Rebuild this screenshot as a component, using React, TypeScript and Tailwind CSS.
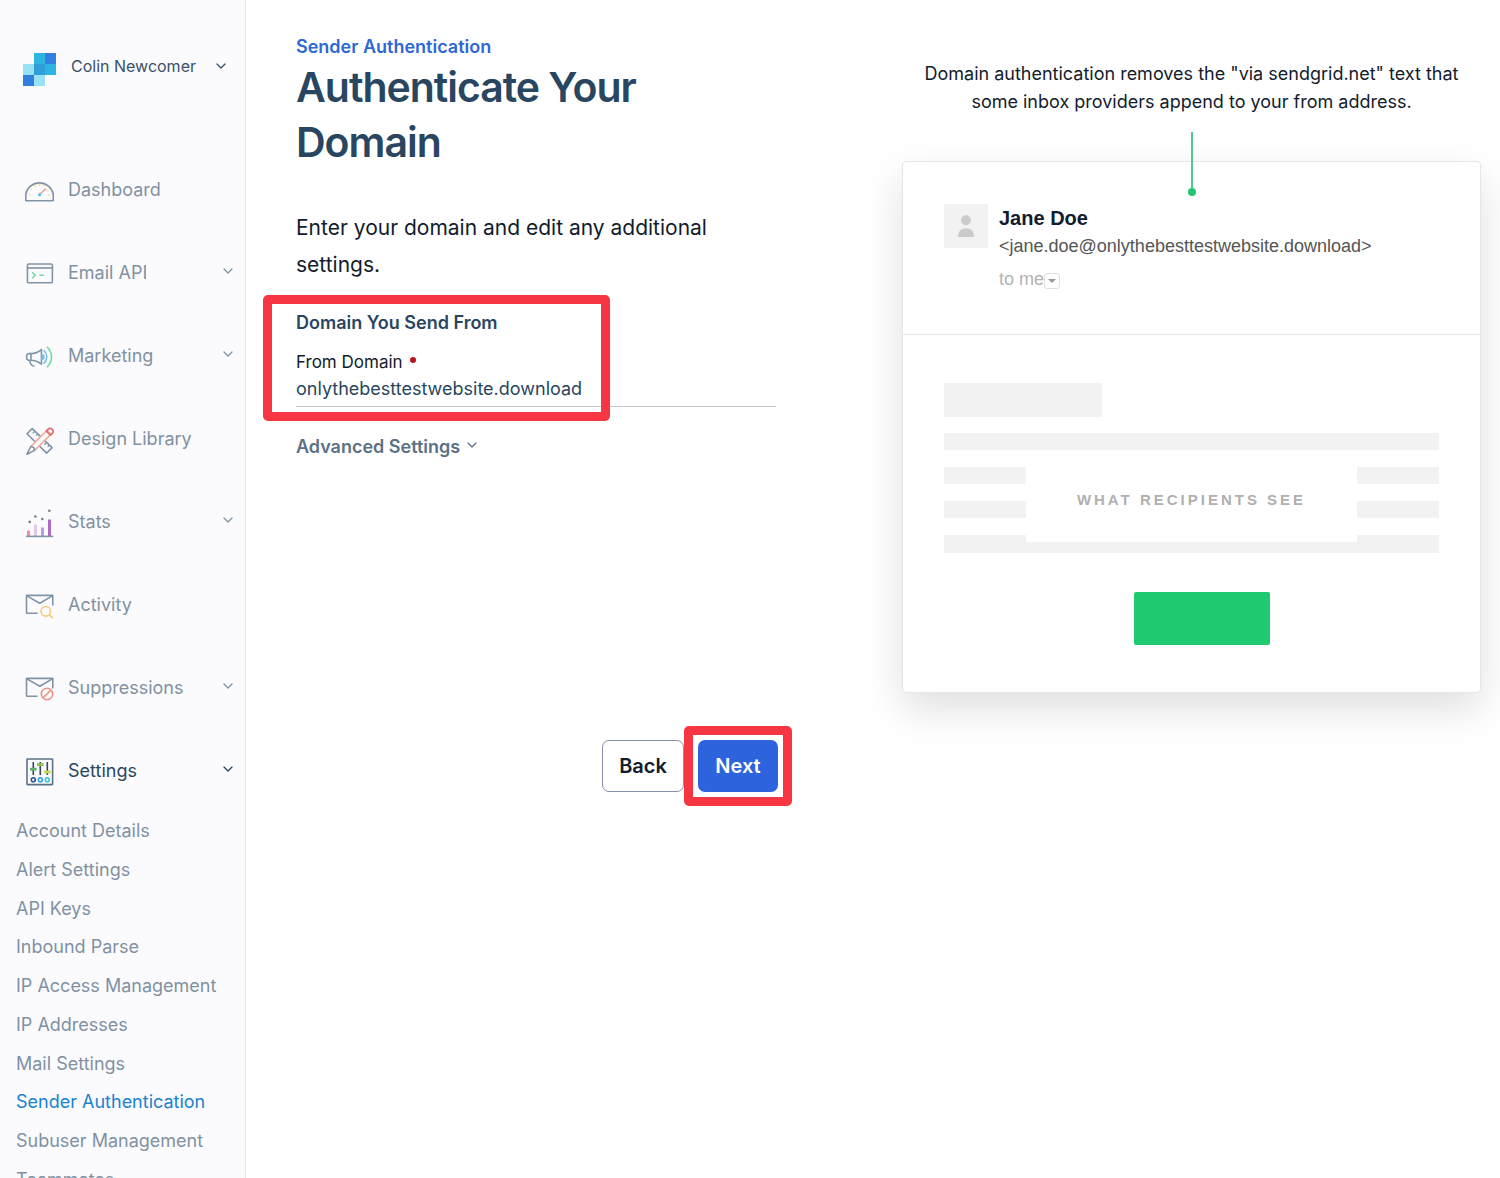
import { useState } from "react";
import type { ReactNode } from "react";
import clsx from "clsx";

const SLATE = "#8194a6";

const Chevron = ({ className }: { className?: string }) => (
  <svg
    viewBox="0 0 10 6"
    fill="none"
    stroke="currentColor"
    strokeWidth="1.3"
    strokeLinecap="round"
    strokeLinejoin="round"
    className={clsx("h-[6px] w-[10px] shrink-0", className)}
  >
    <path d="M1 1l4 4 4-4" />
  </svg>
);

const Logo = () => (
  <svg viewBox="0 0 33 33" className="size-[33px] shrink-0" shapeRendering="crispEdges">
    <rect x="0" y="11" width="11" height="11" fill="#99e1f4" />
    <rect x="11" y="22" width="11" height="11" fill="#99e1f4" />
    <rect x="11" y="0" width="11" height="11" fill="#2db4e1" />
    <rect x="22" y="11" width="11" height="11" fill="#2db4e1" />
    <rect x="11" y="11" width="11" height="11" fill="#2e9fd9" />
    <rect x="22" y="0" width="11" height="11" fill="#337fe0" />
    <rect x="0" y="22" width="11" height="11" fill="#337fe0" />
  </svg>
);

const Icon = ({ children }: { children: ReactNode }) => (
  <svg
    viewBox="0 0 30 30"
    fill="none"
    strokeWidth="1.6"
    strokeLinejoin="round"
    className="mt-0.5 size-[30px] shrink-0"
  >
    {children}
  </svg>
);

const DashboardIcon = () => (
  <Icon>
    <path d="M1.8 24.7V18a13.9 13.4 0 0 1 27.4 0v6.7z" stroke={SLATE} />
    <path
      d="M5 19h1.6M6.8 12.8l1.2 1M10.6 9.6l.7 1.2M15.5 8v2M20.3 9.2l-.7 1.2M25.8 19h-1.6M24.4 14l-1.2.8"
      stroke="#f6dc7c"
    />
    <path d="M16.5 17.8l5.4-5.3" stroke="#ee9a8f" />
    <circle cx="15.6" cy="18.7" r="1.5" fill="#4fb3e3" />
  </Icon>
);

const EmailApiIcon = () => (
  <Icon>
    <rect x="3.4" y="5" width="25" height="18.8" rx="1.4" stroke={SLATE} />
    <path d="M3.4 9h25" stroke={SLATE} />
    <path d="M8.3 13.2l3 3-3 3M15.3 16.2h4.6" stroke="#6fd9a0" />
  </Icon>
);

const MarketingIcon = () => (
  <Icon>
    <path d="M7 11.6c4 0 7.5-1.6 10.5-4v14.6c-3-2.4-6.5-4-10.5-4z" stroke={SLATE} />
    <path d="M7 11.6H4.200L2.700 12.8v4.200l1.500 1.200H7" stroke={SLATE} />
    <path d="M5.800 18.500c.2 3 1.500 5.300 4.600 5.700" stroke={SLATE} />
    <path d="M17.600 12.800a2.200 2.200 0 0 1 0 4.400z" fill="#7db4e6" stroke="#7db4e6" />
    <path d="M19.700 8.300c4 4 4 9.200 0 13.400" stroke="#6cbfe8" />
    <path d="M23 4.800c6 6 6 14.400 0 20.400" stroke="#6fd9a0" />
  </Icon>
);

const DesignIcon = () => (
  <Icon>
    <path d="M3 8.800l5.200-5.200 19.900 19-5.500 5.500z" stroke={SLATE} />
    <path d="M10.800 6.200L8.600 8.400M13.800 9l-1.600 1.600M22.600 17.500l-2.200 2.200M25.300 20.200l-1.600 1.600" stroke={SLATE} strokeWidth="1.300" />
    <path d="M6.800 21.500L23 5.300l3.900 3.900L10.600 25.400z" fill="#fbfbfe" stroke="#f3a898" />
    <path d="M22.300 6l1.600-1.600a2.900 2.900 0 0 1 4.200 4.200l-1.700 1.600z" stroke="#e0686b" />
    <path d="M6.800 21.500L2.900 29.200l7.700-3.800-.9-2.800z" fill="#fbfbfe" stroke={SLATE} />
  </Icon>
);

const StatsIcon = () => (
  <Icon>
    <path d="M4.500 28.500v-6" stroke="#f28bb0" strokeWidth="3" />
    <path d="M11.500 28.500V16.500" stroke="#e0c8ee" strokeWidth="3" />
    <path d="M18.500 28.500v-9" stroke="#b79be6" strokeWidth="3" />
    <path d="M25.500 28.500v-17" stroke="#ad6cc4" strokeWidth="3" />
    <path d="M2 28.400h27.300" stroke={SLATE} />
    <g fill="#6d8193">
      <circle cx="5.700" cy="13.900" r="1.300" />
      <circle cx="11.400" cy="8.500" r="1.300" />
      <circle cx="18.300" cy="11" r="1.300" />
      <circle cx="25.300" cy="2.800" r="1.300" />
    </g>
  </Icon>
);

const Envelope = () => (
  <path
    d="M13.6 22.3H3.4a.9.9 0 0 1-.9-.9V4.4h26.3v10M2.5 4.6l13.2 7.6 13.1-7.6"
    stroke={SLATE}
  />
);

const ActivityIcon = () => (
  <Icon>
    <Envelope />
    <circle cx="21.8" cy="20.3" r="4.8" stroke="#f6cb7d" />
    <path d="M25.300 23.800l3.700 3.400" stroke="#f6cb7d" />
  </Icon>
);

const SuppressionsIcon = () => (
  <Icon>
    <Envelope />
    <circle cx="23" cy="20" r="5.700" stroke="#ee9287" />
    <path d="M19.200 23.800l7.600-7.600" stroke="#ee9287" />
  </Icon>
);

const SettingsIcon = () => (
  <Icon>
    <rect x="3" y="2" width="25.600" height="25.600" rx=".6" stroke="#5b7388" />
    <path d="M9.300 5v13M16.300 5v13M23.300 5v13" stroke="#2f4a62" />
    <path d="M6 12.200h6.600" stroke="#58b368" strokeWidth="2.800" />
    <path d="M13 7.600h6.600" stroke="#8cc152" strokeWidth="2.800" />
    <path d="M20 15h6.600" stroke="#c6d94b" strokeWidth="2.800" />
    <circle cx="9.300" cy="22.700" r="2" stroke="#35508a" />
    <circle cx="16.300" cy="22.700" r="2" stroke="#2f9fd9" />
    <circle cx="23.300" cy="22.700" r="2" stroke="#35c0dc" />
  </Icon>
);

const navItems = [
  { label: "Dashboard", icon: <DashboardIcon /> },
  { label: "Email API", icon: <EmailApiIcon />, expandable: true },
  { label: "Marketing", icon: <MarketingIcon />, expandable: true },
  { label: "Design Library", icon: <DesignIcon /> },
  { label: "Stats", icon: <StatsIcon />, expandable: true },
  { label: "Activity", icon: <ActivityIcon /> },
  { label: "Suppressions", icon: <SuppressionsIcon />, expandable: true },
  { label: "Settings", icon: <SettingsIcon />, expandable: true, active: true },
];

const settingsLinks = [
  "Account Details",
  "Alert Settings",
  "API Keys",
  "Inbound Parse",
  "IP Access Management",
  "IP Addresses",
  "Mail Settings",
  "Sender Authentication",
  "Subuser Management",
  "Teammates",
];

const Sidebar = () => (
  <aside className="w-[246px] shrink-0 overflow-hidden border-r border-[#e6e8ee] bg-[#fbfbfe] text-lg text-[#8091a2]">
    <button className="flex w-full items-center pt-[53px] pr-[19px] pl-[23px] text-[#3a5065]">
      <Logo />
      <span className="mb-2 ml-[15px] flex flex-1 items-center justify-between text-base">
        Colin Newcomer
        <Chevron />
      </span>
    </button>
    <nav className="mt-[62px]">
      <ul>
        {navItems.map((item) => (
          <li key={item.label}>
            <a
              href="#"
              className={clsx(
                "flex h-[83px] items-center pr-3 pl-6",
                item.active && "text-[#294661]"
              )}
            >
              {item.icon}
              <span className="ml-[14px] flex-1">{item.label}</span>
              {item.expandable && <Chevron className="mb-1" />}
            </a>
          </li>
        ))}
      </ul>
      <ul className="flex h-[387px] flex-col pl-4">
        {settingsLinks.map((label) => (
          <li key={label} className="flex flex-1 items-center">
            <a href="#" className={clsx(label === "Sender Authentication" && "text-[#1a82cf]")}>
              {label}
            </a>
          </li>
        ))}
      </ul>
    </nav>
  </aside>
);

const Highlight = ({ className }: { className: string }) => (
  <div
    className={clsx("pointer-events-none absolute rounded-[5px] border-[9px] border-[#f73644]", className)}
  />
);

const DomainForm = () => {
  const [domain, setDomain] = useState("onlythebesttestwebsite.download");

  return (
    <form className="pt-[35px]" onSubmit={(e) => e.preventDefault()}>
      <a href="#" className="block text-lg leading-6 font-semibold text-[#2e67d6]">
        Sender Authentication
      </a>
      <h1 className="mt-px text-[41px] leading-[55px] font-semibold tracking-tight text-[#294661]">
        Authenticate Your Domain
      </h1>
      <p className="mt-[39px] text-[21px] leading-[37px] text-[#121c2d]">
        Enter your domain and edit any additional settings.
      </p>
      <div className="relative mt-7">
        <h2 className="text-lg leading-6 font-semibold text-[#294661]">Domain You Send From</h2>
        <label htmlFor="domain" className="mt-[15px] flex items-center gap-[7px] text-[17px] leading-6 text-[#121c2d]">
          From Domain
          <span className="mb-1 size-[6px] rounded-full bg-[#b5151b]" />
        </label>
        <input
          id="domain"
          value={domain}
          onChange={(e) => setDomain(e.target.value)}
          className="block h-[33px] w-full border-b border-[#c6c8cc] pb-1 text-lg text-[#294661] outline-none"
        />
        <Highlight className="-top-4 -bottom-[14px] -left-[33px] w-[347px]" />
      </div>
      <button type="button" className="mt-7 flex items-center gap-[7px] text-lg leading-6 font-semibold text-[#5b7186]">
        Advanced Settings
        <Chevron className="mb-1" />
      </button>
      <div className="-mr-0.5 mt-[281px] flex justify-end gap-[14px] text-xl font-semibold">
        <button
          type="button"
          className="h-[52px] w-[82px] rounded-[7px] border border-[#8891aa] text-[#121c2d]"
        >
          Back
        </button>
        <div className="relative">
          <button type="submit" className="h-[52px] w-20 rounded-[7px] bg-[#2e63de] text-white">
            Next
          </button>
          <Highlight className="-inset-x-[14px] -inset-y-[14px]" />
        </div>
      </div>
    </form>
  );
};

const EmailPreview = () => (
  <section className="flex flex-col pt-[60px]">
    <p className="px-4 text-center text-lg leading-7 text-[#121c2d]">
      Domain authentication removes the "via sendgrid.net" text that some inbox providers append to
      your from address.
    </p>
    <div className="relative mt-[45px] rounded border border-[#e6e6e8] bg-white font-['Liberation_Sans',sans-serif] shadow-[0_16px_40px_rgba(0,0,0,0.13)]">
      <div className="absolute -top-[30px] left-1/2 flex -translate-x-1/2 flex-col items-center">
        <span className="h-14 w-[2px] bg-[#4fcb8d]" />
        <span className="size-2 rounded-full bg-[#22c573]" />
      </div>
      <div className="flex h-[173px] gap-[11px] border-b border-[#e6e6e8] px-[41px] pt-[42px]">
        <div className="flex size-11 shrink-0 items-center justify-center bg-[#f2f2f2]">
          <svg viewBox="0 0 16 22" fill="#cbcbcb" className="h-[22px] w-4">
            <circle cx="8" cy="5.300" r="5" />
            <path d="M0 22c0-5.500 3-8.700 8-8.700s8 3.200 8 8.700z" />
          </svg>
        </div>
        <div>
          <p className="text-[20px] leading-7 font-bold text-[#121c2d]">Jane Doe</p>
          <p className="text-lg leading-7 text-[#555]">&lt;jane.doe@onlythebesttestwebsite.download&gt;</p>
          <p className="mt-[3px] flex items-center text-lg leading-8 text-[#b3b3b3]">
            to me
            <span className="mt-1 flex size-4 items-center justify-center rounded-[3px] border border-[#e0e0e0]">
              <svg viewBox="0 0 8 4" fill="#999" className="h-1 w-2">
                <path d="M0 0h8L4 4z" />
              </svg>
            </span>
          </p>
        </div>
      </div>
      <div className="px-[41px] pt-12 pb-[47px]">
        <div className="h-[34px] w-[158px] bg-[#f2f2f2]" />
        <div className="relative mt-4 flex flex-col gap-[17px]">
          <div className="h-[17px] bg-[#f2f2f2]" />
          <div className="h-[17px] bg-[#f2f2f2]" />
          <div className="h-[17px] bg-[#f2f2f2]" />
          <div className="h-[18px] bg-[#f2f2f2]" />
          <div className="absolute inset-x-[82px] top-[25px] bottom-[11px] flex items-center justify-center bg-white text-[15px] font-bold tracking-[3px] text-[#b0b0b0]">
            WHAT RECIPIENTS SEE
          </div>
        </div>
        <div className="mt-[39px] ml-[190px] h-[53px] w-[136px] rounded-[2px] bg-[#1ecb70]" />
      </div>
    </div>
  </section>
);

export default function App() {
  return (
    <div className="flex h-screen overflow-hidden bg-white font-[Inter,sans-serif]">
      <Sidebar />
      <main className="grid flex-1 grid-cols-[480fr_579fr] items-start gap-x-[126px] pr-[19px] pl-[50px]">
        <DomainForm />
        <EmailPreview />
      </main>
    </div>
  );
}
